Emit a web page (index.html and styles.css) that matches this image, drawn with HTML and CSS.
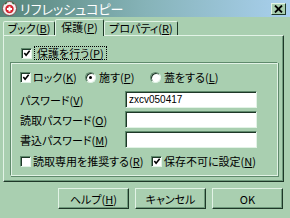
FILE: index.html
```html
<!DOCTYPE html>
<html lang="ja">
<head>
<meta charset="utf-8">
<title>リフレッシュコピー</title>
<link rel="stylesheet" href="styles.css">
</head>
<body>
<div class="titlebar">
  <svg class="appicon" viewBox="0 0 15 15" width="15" height="15">
    <circle cx="7.5" cy="7.5" r="7" fill="#f4f0f0" stroke="#7a4a4a" stroke-width="1"/>
    <circle cx="7.5" cy="8" r="4.2" fill="#d8202c"/>
    <rect x="6.5" y="5.5" width="2" height="5" fill="#fff"/>
    <rect x="5" y="7" width="5" height="2" fill="#fff"/>
    <path d="M3 3 L5 1.5 M12 3 L10 1.5" stroke="#2a6a3a" stroke-width="1.2"/>
  </svg>
  <span class="title">リフレッシュコピー</span>
  <div class="close">
    <svg viewBox="0 0 9 8" width="9" height="8"><path d="M1 0.5 L8 7.5 M8 0.5 L1 7.5" stroke="#000" stroke-width="1.8"/></svg>
  </div>
</div>
<div class="tabs">
  <div class="tab t1">ブック(<u>B</u>)</div>
  <div class="tab t2 sel">保護(<u>P</u>)</div>
  <div class="tab t3">プロパティ(<u>R</u>)</div>
</div>
<div class="panel">
  <div class="toprow">
    <span class="cb checked"><svg viewBox="0 0 9 9" width="9" height="9"><path d="M1.5 4 L3.5 6.5 L7.5 1.5" fill="none" stroke="#000" stroke-width="1.8"/></svg></span>
    <span class="focus">保護を行う(<u>P</u>)</span>
  </div>
  <div class="group">
    <div class="opts">
      <div class="opt"><span class="cb checked"><svg viewBox="0 0 9 9" width="9" height="9"><path d="M1.5 4 L3.5 6.5 L7.5 1.5" fill="none" stroke="#000" stroke-width="1.8"/></svg></span><span>ロック(<u>K</u>)</span></div>
      <div class="opt"><span class="rb on"></span><span>施す(<u>P</u>)</span></div>
      <div class="opt"><span class="rb"></span><span>蓋をする(<u>L</u>)</span></div>
    </div>
    <div class="fields">
      <label class="flabel">パスワード(<u>V</u>)</label>
      <div class="input">zxcv050417</div>
      <label class="flabel">読取パスワード(<u>O</u>)</label>
      <div class="input"></div>
      <label class="flabel">書込パスワード(<u>M</u>)</label>
      <div class="input"></div>
    </div>
    <div class="opts bottom">
      <div class="opt wide"><span class="cb"></span><span>読取専用を推奨する(<u>R</u>)</span></div>
      <div class="opt"><span class="cb checked"><svg viewBox="0 0 9 9" width="9" height="9"><path d="M1.5 4 L3.5 6.5 L7.5 1.5" fill="none" stroke="#000" stroke-width="1.8"/></svg></span><span>保存不可に設定(<u>N</u>)</span></div>
    </div>
  </div>
</div>
<div class="buttons">
  <div class="btn">ヘルプ(<u>H</u>)</div>
  <div class="btn">キャンセル</div>
  <div class="btn">OK</div>
</div>
</body>
</html>
```

FILE: styles.css
```css
* { box-sizing: border-box; }
html, body { margin: 0; padding: 0; }
body {
  width: 290px;
  height: 218px;
  overflow: hidden;
  background: #a9cfb0;
  font-family: "Noto Sans CJK JP", "Noto Sans", sans-serif;
  font-size: 11px;
  font-feature-settings: "palt";
  color: #000;
}
u { text-decoration: underline; text-underline-offset: 1px; }

.titlebar {
  height: 17px;
  display: flex;
  align-items: center;
  background: linear-gradient(to right, #56857a, #86b3b8 50%, #a9d0ee);
  padding: 0 4px 0 2px;
}
.appicon { width: 15px; height: 15px; margin-right: 3px; flex: none; }
.title { color: #fff; font-size: 13px; line-height: 16px; flex: 1; }
.close {
  width: 15px;
  height: 12px;
  margin-top: 1px;
  background: #a9cfb0;
  border: 1px solid;
  border-color: #e2f3e6 #1e3828 #1e3828 #e2f3e6;
  display: flex;
  align-items: center;
  justify-content: center;
}

.tabs {
  display: flex;
  align-items: flex-end;
  height: 18px;
  padding-left: 3px;
  position: relative;
  z-index: 1;
}
.tab {
  height: 14px;
  border: 1px solid;
  border-bottom: none;
  border-color: #e2f3e6 #1e3828 transparent #e2f3e6;
  border-radius: 2px 2px 0 0;
  line-height: 12px;
  text-align: center;
  background: #a9cfb0;
}
.t1 { width: 52px; }
.t2 { width: 49px; }
.t3 { width: 74px; }
.tab.sel {
  height: 17px;
  margin-bottom: -1px;
  line-height: 14px;
}

.panel {
  margin-left: 3px;
  width: 281px;
  height: 147px;
  border: 1px solid;
  border-color: #e2f3e6 #1e3828 #1e3828 #e2f3e6;
  box-shadow: inset -1px -1px 0 #6f9a7c;
  padding: 10px 0 0 6px;
}

.toprow {
  display: flex;
  align-items: center;
  height: 14px;
  padding-left: 11px;
}
.focus {
  margin-left: 1px;
  padding: 0 2px;
  outline: 1px dotted #000;
  line-height: 12px;
}

.cb {
  width: 11px;
  height: 11px;
  flex: none;
  background: #fff;
  border: 1px solid;
  border-color: #5f8a6c #e2f3e6 #e2f3e6 #5f8a6c;
  box-shadow: inset 1px 1px 0 #1e3828;
  display: flex;
  align-items: center;
  justify-content: center;
  margin-right: 2px;
}
.cb svg { margin: 1px 0 0 1px; }
.rb {
  width: 11px;
  height: 11px;
  flex: none;
  border-radius: 50%;
  background: #fff;
  border: 1px solid;
  border-color: #5f8a6c #e2f3e6 #e2f3e6 #5f8a6c;
  box-shadow: inset 1px 1px 0 #1e3828;
  margin-right: 3px;
  position: relative;
}
.rb.on::after {
  content: "";
  position: absolute;
  left: 3px;
  top: 3px;
  width: 3px;
  height: 3px;
  border-radius: 50%;
  background: #000;
}

.group {
  margin-top: 2px;
  width: 268px;
  height: 114px;
  border: 1px solid;
  border-color: #5f8a6c #e2f3e6 #e2f3e6 #5f8a6c;
  box-shadow: inset 1px 1px 0 #e2f3e6, 1px 1px 0 #5f8a6c;
  padding: 7px 0 0 9px;
}
.opts {
  display: grid;
  grid-template-columns: 65px 65px auto;
  height: 14px;
}
.opts.bottom {
  grid-template-columns: 131px auto;
  margin-top: 6px;
}
.opt {
  display: flex;
  align-items: center;
  white-space: nowrap;
  line-height: 14px;
}

.fields {
  display: grid;
  grid-template-columns: 105px 132px;
  grid-auto-rows: 17px;
  row-gap: 3px;
  margin-top: 7px;
  align-items: center;
}
.flabel { line-height: 14px; white-space: nowrap; }
.input {
  height: 17px;
  background: #fff;
  border: 1px solid;
  border-color: #5f8a6c #e2f3e6 #e2f3e6 #5f8a6c;
  box-shadow: inset 1px 1px 0 #1e3828;
  font-family: "Liberation Sans", sans-serif;
  font-size: 10px;
  line-height: 15px;
  padding-left: 3px;
}

.buttons {
  display: flex;
  justify-content: flex-end;
  gap: 6px;
  padding: 6px 7px 0 0;
}
.btn {
  width: 71px;
  height: 21px;
  border: 1px solid;
  border-color: #e2f3e6 #1e3828 #1e3828 #e2f3e6;
  box-shadow: inset -1px -1px 0 #6f9a7c;
  display: flex;
  align-items: center;
  justify-content: center;
  line-height: 14px;
}
```
